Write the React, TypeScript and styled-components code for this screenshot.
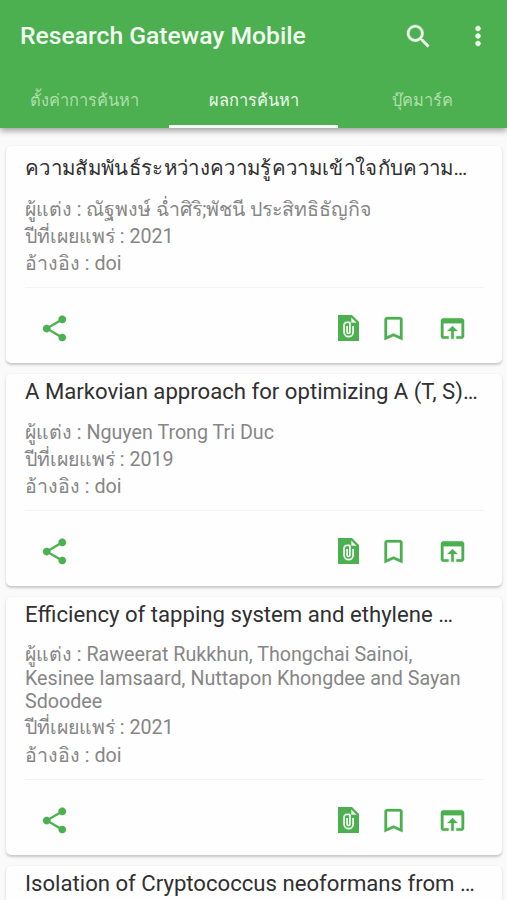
import React from "react";
import styled, { createGlobalStyle } from "styled-components";

const GREEN = "#4caf50";

const Global = createGlobalStyle`
  *, *::before, *::after { box-sizing: border-box; }
  body { margin: 0; background: #fafafa; font-family: Roboto, "Noto Sans", sans-serif; }
`;

const Screen = styled.div`
  width: 507px;
  height: 900px;
  overflow: hidden;
  display: flex;
  flex-direction: column;
  background: #fafafa;
`;

const Header = styled.header`
  flex: none;
  height: 128px;
  background: ${GREEN};
  box-shadow: 0 3px 6px rgba(0, 0, 0, 0.35);
  z-index: 1;
`;

const Toolbar = styled.div`
  display: flex;
  align-items: center;
  height: 72px;
  padding: 0 14px 0 20px;
`;

const AppTitle = styled.h1`
  flex: 1;
  margin: 0;
  color: #f1fbf0;
  font-size: 24.7px;
  font-weight: 500;
  line-height: 30px;
  white-space: nowrap;
`;

const BarButton = styled.button<{ $gap?: number }>`
  display: flex;
  padding: 0;
  border: 0;
  background: none;
  color: #edfbea;
  margin-left: ${(p) => p.$gap ?? 0}px;
`;

const Tabs = styled.nav`
  display: grid;
  grid-template-columns: repeat(3, 1fr);
  height: 56px;
`;

const Tab = styled.a<{ $active?: boolean }>`
  display: flex;
  align-items: center;
  justify-content: center;
  padding-top: 4px;
  border-bottom: 3px solid ${(p) => (p.$active ? "#f6fbf5" : "transparent")};
  color: ${(p) => (p.$active ? "#effbed" : "#afdfaa")};
  font-size: 16.4px;
  line-height: 24px;
  white-space: nowrap;
`;

const List = styled.main`
  display: flex;
  flex-direction: column;
  gap: 11px;
  padding: 18px 5px 0 6px;
`;

const Card = styled.article<{ $height: number }>`
  flex: none;
  display: flex;
  flex-direction: column;
  height: ${(p) => p.$height}px;
  padding: 4px 18px 0 19px;
  border-radius: 5px;
  background: #fefefe;
  box-shadow: 0 1.5px 2.5px rgba(0, 0, 0, 0.2);
`;

const CardTitle = styled.h2`
  margin: 0 0 13px;
  color: #303030;
  font-size: 22.15px;
  font-weight: 400;
  line-height: 27px;
  height: 28px;
  white-space: nowrap;
`;

const ThaiCardTitle = styled(CardTitle)`
  margin-bottom: 12px;
  font-size: 20.45px;
  letter-spacing: 0.33px;
  line-height: 36px;
  height: 34px;
`;

const Line = styled.div<{ $height?: number }>`
  height: ${(p) => p.$height ?? 27}px;
  line-height: ${(p) => p.$height ?? 27}px;
  color: #868686;
  font-size: 19.7px;
  white-space: nowrap;
`;

const ThaiText = styled.span`
  font-size: 19.55px;
`;

const Actions = styled.div`
  display: flex;
  align-items: center;
  height: 69px;
  margin-top: 6px;
`;

const Divider = styled.hr`
  width: 100%;
  height: 1px;
  margin: auto 0 0;
  border: 0;
  background: #f3f3f3;
`;

const Action = styled.button<{ $margin: string }>`
  display: flex;
  padding: 0;
  border: 0;
  background: none;
  color: ${GREEN};
  margin: ${(p) => p.$margin};
`;

const PATHS = {
  search:
    "M15.5 14h-.79l-.28-.27C15.41 12.59 16 11.11 16 9.5 16 5.91 13.09 3 9.5 3S3 5.91 3 9.5 5.91 16 9.5 16c1.61 0 3.09-.59 4.23-1.57l.27.28v.79l5 4.99L20.49 19l-4.99-5zm-6 0C7.01 14 5 11.99 5 9.5S7.01 5 9.5 5 14 7.01 14 9.5 11.99 14 9.5 14z",
  more: "M12 8c1.1 0 2-.9 2-2s-.9-2-2-2-2 .9-2 2 .9 2 2 2zm0 2c-1.1 0-2 .9-2 2s.9 2 2 2 2-.9 2-2-.9-2-2-2zm0 6c-1.1 0-2 .9-2 2s.9 2 2 2 2-.9 2-2-.9-2-2-2z",
  share:
    "M18 16.08c-.76 0-1.44.3-1.96.77L8.91 12.7c.05-.23.09-.46.09-.7s-.04-.47-.09-.7l7.05-4.11c.54.5 1.25.81 2.04.81 1.66 0 3-1.34 3-3s-1.34-3-3-3-3 1.34-3 3c0 .24.04.47.09.7L8.04 9.81C7.5 9.31 6.79 9 6 9c-1.66 0-3 1.34-3 3s1.34 3 3 3c.79 0 1.5-.31 2.04-.81l7.12 4.16c-.05.21-.08.43-.08.65 0 1.61 1.31 2.92 2.92 2.92s2.92-1.31 2.92-2.92-1.31-2.92-2.92-2.92z",
  bookmark:
    "M17 3H7c-1.1 0-1.99.9-1.99 2L5 21l7-3 7 3V5c0-1.1-.9-2-2-2zm0 15l-5-2.18L7 18V5h10v13z",
  open: "M19 4H5c-1.11 0-2 .9-2 2v12c0 1.1.89 2 2 2h4v-2H5V8h14v10h-4v2h4c1.1 0 2-.9 2-2V6c0-1.1-.89-2-2-2zm-7 6l-4 4h3v6h2v-6h3l-4-4z",
};

const Icon = ({
  name,
  size = 31,
  weight = 0.2,
}: {
  name: keyof typeof PATHS;
  size?: number;
  weight?: number;
}) => (
  <svg
    width={size}
    height={size}
    viewBox="0 0 24 24"
    fill="currentColor"
    stroke="currentColor"
    strokeWidth={weight}
  >
    <path d={PATHS[name]} />
  </svg>
);

const AttachmentIcon = () => (
  <svg width="21" height="27" viewBox="0 0 21 27" fill="none">
    <path d="M.5 0H14L21 7V25.500a.5.5 0 0 1-.5.5H.5a.5.5 0 0 1-.5-.5V.5A.5.5 0 0 1 .5 0Z" fill={GREEN} />
    <path d="M13.300 2.500V7.800H18.600Z" fill="#eef8ed" />
    <path
      d="M11.900 7.300H8.800A2.700 2.700 0 0 0 6.100 10v7.200a4.500 4.500 0 0 0 9 0V11M11.900 7.300v9.700a1.400 1.400 0 0 1-2.800 0v-6"
      stroke="#f1faf0"
      strokeWidth="1.800"
    />
  </svg>
);

interface TextLine {
  thai?: string;
  text?: string;
  height?: number;
}

interface Result {
  title: string;
  thai?: boolean;
  height: number;
  lines: TextLine[];
}

const results: Result[] = [
  {
    title: "ความสัมพันธ์ระหว่างความรู้ความเข้าใจกับความ…",
    thai: true,
    height: 217,
    lines: [
      { thai: "ผู้แต่ง : ณัฐพงษ์ ฉ่ำศิริ;พัชนี ประสิทธิธัญกิจ" },
      { thai: "ปีที่เผยแพร่ : ", text: "2021" },
      { thai: "อ้างอิง : ", text: "doi" },
    ],
  },
  {
    title: "A Markovian approach for optimizing A (T, S)…",
    height: 212,
    lines: [
      { thai: "ผู้แต่ง : ", text: "Nguyen Trong Tri Duc" },
      { thai: "ปีที่เผยแพร่ : ", text: "2019" },
      { thai: "อ้างอิง : ", text: "doi" },
    ],
  },
  {
    title: "Efficiency of tapping system and ethylene …",
    height: 258,
    lines: [
      { thai: "ผู้แต่ง : ", text: "Raweerat Rukkhun, Thongchai Sainoi,", height: 25 },
      { text: "Kesinee Iamsaard, Nuttapon Khongdee and Sayan", height: 23 },
      { text: "Sdoodee", height: 23 },
      { thai: "ปีที่เผยแพร่ : ", text: "2021", height: 30 },
      { thai: "อ้างอิง : ", text: "doi", height: 25 },
    ],
  },
  {
    title: "Isolation of Cryptococcus neoformans from …",
    height: 212,
    lines: [],
  },
];

const ResultCard = ({ result }: { result: Result }) => {
  const Title = result.thai ? ThaiCardTitle : CardTitle;
  return (
    <Card $height={result.height}>
      <Title>{result.title}</Title>
      {result.lines.map((line, i) => (
        <Line key={i} $height={line.height}>
          {line.thai && <ThaiText>{line.thai}</ThaiText>}
          {line.text}
        </Line>
      ))}
      <Divider />
      <Actions>
        <Action $margin="0 auto 0 14px" aria-label="Share">
          <Icon name="share" weight={0.1} />
        </Action>
        <Action $margin="0 19px 0 0" aria-label="Attachment">
          <AttachmentIcon />
        </Action>
        <Action $margin="0 28px 0 0" aria-label="Bookmark">
          <Icon name="bookmark" />
        </Action>
        <Action $margin="0 16px 0 0" aria-label="Open">
          <Icon name="open" />
        </Action>
      </Actions>
    </Card>
  );
};

export default function App() {
  return (
    <>
      <Global />
      <Screen>
        <Header>
          <Toolbar>
            <AppTitle>Research Gateway Mobile</AppTitle>
            <BarButton aria-label="Search">
              <Icon name="search" weight={0.2} />
            </BarButton>
            <BarButton $gap={29} aria-label="More">
              <Icon name="more" size={30} weight={0.4} />
            </BarButton>
          </Toolbar>
          <Tabs>
            <Tab>ตั้งค่าการค้นหา</Tab>
            <Tab $active>ผลการค้นหา</Tab>
            <Tab>บุ๊คมาร์ค</Tab>
          </Tabs>
        </Header>
        <List>
          {results.map((r) => (
            <ResultCard key={r.title} result={r} />
          ))}
        </List>
      </Screen>
    </>
  );
}
